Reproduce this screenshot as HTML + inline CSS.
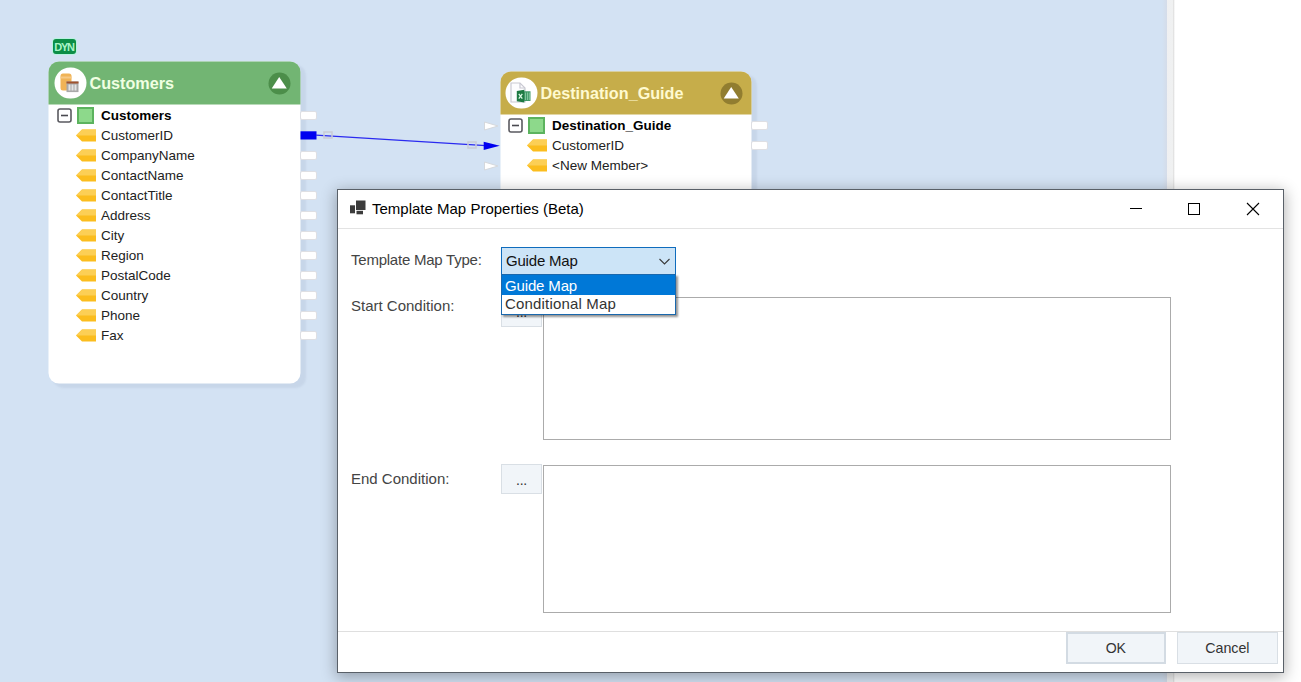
<!DOCTYPE html>
<html>
<head>
<meta charset="utf-8">
<title>Template Map Properties (Beta)</title>
<style>
*{box-sizing:border-box;margin:0;padding:0}
html,body{width:1301px;height:682px;overflow:hidden;background:#fff;font-family:"Liberation Sans",sans-serif}
#root{position:absolute;left:0;top:0;width:1301px;height:682px;overflow:hidden;background:#fff}
.abs{position:absolute}
#canvas{left:0;top:0;width:1167px;height:682px;background:linear-gradient(to right,#d3e2f3 0,#d3e2f3 1162px,#d4dce9 1167px)}
#strip{left:1167px;top:0;width:8px;height:682px;background:linear-gradient(to right,#eff0f2 0,#f0f1f1 6px,#e3e3e3 6.500px,#fff 8px)}
.node{position:absolute;background:#fff;border-radius:10.500px;transform:translate(-.5px,-.5px);box-shadow:5px 4px 2px rgba(120,140,170,.13)}
.node .hd{position:absolute;left:0;top:0;width:100%;height:43px;border-radius:10.500px 10.500px 0 0}
.node .ttl{position:absolute;left:41px;top:12px;font-weight:bold;font-size:16.200px;line-height:18px;color:#f0ffe2;white-space:nowrap}
.node .ico{position:absolute;left:6px;top:5.500px;width:31.500px;height:31.500px;border-radius:50%;background:#fff}
.node .tog{position:absolute;top:10.500px;width:22px;height:22px;border-radius:50%}
.row{position:absolute;font-size:13.5px;line-height:16px;color:#222;white-space:nowrap}
.row.b{font-weight:bold;color:#000}
.port{position:absolute;width:17px;height:9px;background:#fff;border:1px solid #dedfe3;border-radius:2px}
#dlg{left:337px;top:189px;width:947px;height:484px;background:#fff;border:1px solid #596068;box-shadow:0 3px 14px 1px rgba(0,0,0,.3)}
.lbl{position:absolute;font-size:15px;line-height:18px;color:#444;white-space:nowrap}
.btn{position:absolute;background:#f1f5f9;border:1px solid #d9dfe5;font-size:14.5px;color:#333;text-align:center}
.ta{position:absolute;background:#fff;border:1px solid #ababab}
</style>
</head>
<body>
<div id="root">
<div id="canvas" class="abs"></div>
<div id="strip" class="abs"></div>

<!-- DYN badge -->
<div class="abs" style="left:52px;top:38px;width:25px;height:17px;border-radius:4px;background:#b9f3e0"></div>
<div class="abs" style="left:53px;top:39px;width:23px;height:15px;border-radius:3px;background:#0c8e47;color:#a9f5c6;font-weight:bold;font-size:11px;line-height:16px;text-align:center;letter-spacing:-1.300px;text-indent:-1px;overflow:hidden">DYN</div>

<!-- Customers node -->
<div class="node" id="n1" style="left:49px;top:62px;width:252px;height:322px">
  <div class="hd" style="background:#72b573"></div>
  <div class="ico"></div>
  <svg class="abs" style="left:10px;top:9px" width="24" height="24" viewBox="0 0 24 24">
    <rect x="2" y="3" width="11" height="17" rx="2.5" fill="#f0b356"/>
    <rect x="2" y="6" width="11" height="2" fill="#f6c984"/>
    <rect x="8" y="11" width="12" height="10.600" fill="#a9a9a9"/>
    <rect x="8" y="11" width="12" height="2" fill="#a0522d"/>
    <rect x="10" y="14" width="2" height="6" fill="#e4e4e4"/>
    <rect x="13" y="14" width="2" height="6" fill="#e4e4e4"/>
    <rect x="16" y="14" width="2" height="6" fill="#e4e4e4"/>
  </svg>
  <div class="ttl">Customers</div>
  <div class="tog" style="left:220px;background:#4c8e4a"></div>
  <svg class="abs" style="left:223px;top:14.500px" width="16" height="13" viewBox="0 0 16 13"><path d="M7.700 0.500 L15.300 12 L0.200 12 Z" fill="#fff"/></svg>
</div>

<!-- Destination node -->
<div class="node" id="n2" style="left:501px;top:72px;width:251px;height:160px">
  <div class="hd" style="background:#c6ad4a"></div>
  <div class="ico" style="left:5px"></div>
  <svg class="abs" style="left:8px;top:9px" width="24" height="24" viewBox="0 0 24 24">
    <path d="M2.500 2.500 h9 l5 5 v14 h-14 z" fill="#fdfdff" stroke="#c9c9d2" stroke-width="1.200"/>
    <path d="M11.500 2.500 v5 h5" fill="none" stroke="#c9c9d2" stroke-width="1.200"/>
    <path d="M15.600 10.800 h6.400 v9.600 h-6.400 z" fill="#3f9a68"/>
    <path d="M17 12 v7.500 M19 12 v7.500 M20.800 12 v7.500" stroke="#8fd0ab" stroke-width=".8"/>
    <path d="M8.300 10.500 L15.800 9.300 V22 L8.300 20.800 Z" fill="#1d7a43"/>
    <path d="M10.300 13.300 L13.800 18.200 M13.800 13.300 L10.300 18.200" stroke="#d9f7e4" stroke-width="1.300"/>
  </svg>
  <div class="ttl" style="left:40px;color:#fffad0">Destination_Guide</div>
  <div class="tog" style="left:219.500px;background:#917d30"></div>
  <svg class="abs" style="left:222.500px;top:14.500px" width="16" height="13" viewBox="0 0 16 13"><path d="M7.700 0.500 L15.300 12 L0.200 12 Z" fill="#fff"/></svg>
</div>

<div id="rows">
<svg class="abs" style="left:57px;top:108px" width="15" height="15" viewBox="0 0 15 15"><rect x="1" y="1" width="13" height="13" rx="2" fill="#fff" stroke="#5a5a60" stroke-width="1.6"/><rect x="4" y="6.700" width="7" height="1.600" fill="#4a4a50"/></svg>
<div class="abs" style="left:77px;top:107px;width:17px;height:17px;background:#8dd98b;border:2px solid #5cb35e"></div>
<div class="row b" style="left:101px;top:108px">Customers</div>
<div class="port" style="left:300px;top:111px"></div>
<svg class="abs" style="left:76px;top:129px" width="20" height="13" viewBox="0 0 20 13"><path d="M0 6.500 L6 0.500 H20 V12.500 H6 Z" fill="#fbbd1e"/><path d="M0 6.500 L6 0.500 H20 V6.500 Z" fill="#fccf55"/></svg>
<div class="row" style="left:101px;top:128px">CustomerID</div>
<svg class="abs" style="left:76px;top:149px" width="20" height="13" viewBox="0 0 20 13"><path d="M0 6.500 L6 0.500 H20 V12.500 H6 Z" fill="#fbbd1e"/><path d="M0 6.500 L6 0.500 H20 V6.500 Z" fill="#fccf55"/></svg>
<div class="row" style="left:101px;top:148px">CompanyName</div>
<div class="port" style="left:300px;top:151px"></div>
<svg class="abs" style="left:76px;top:169px" width="20" height="13" viewBox="0 0 20 13"><path d="M0 6.500 L6 0.500 H20 V12.500 H6 Z" fill="#fbbd1e"/><path d="M0 6.500 L6 0.500 H20 V6.500 Z" fill="#fccf55"/></svg>
<div class="row" style="left:101px;top:168px">ContactName</div>
<div class="port" style="left:300px;top:171px"></div>
<svg class="abs" style="left:76px;top:189px" width="20" height="13" viewBox="0 0 20 13"><path d="M0 6.500 L6 0.500 H20 V12.500 H6 Z" fill="#fbbd1e"/><path d="M0 6.500 L6 0.500 H20 V6.500 Z" fill="#fccf55"/></svg>
<div class="row" style="left:101px;top:188px">ContactTitle</div>
<div class="port" style="left:300px;top:191px"></div>
<svg class="abs" style="left:76px;top:209px" width="20" height="13" viewBox="0 0 20 13"><path d="M0 6.500 L6 0.500 H20 V12.500 H6 Z" fill="#fbbd1e"/><path d="M0 6.500 L6 0.500 H20 V6.500 Z" fill="#fccf55"/></svg>
<div class="row" style="left:101px;top:208px">Address</div>
<div class="port" style="left:300px;top:211px"></div>
<svg class="abs" style="left:76px;top:229px" width="20" height="13" viewBox="0 0 20 13"><path d="M0 6.500 L6 0.500 H20 V12.500 H6 Z" fill="#fbbd1e"/><path d="M0 6.500 L6 0.500 H20 V6.500 Z" fill="#fccf55"/></svg>
<div class="row" style="left:101px;top:228px">City</div>
<div class="port" style="left:300px;top:231px"></div>
<svg class="abs" style="left:76px;top:249px" width="20" height="13" viewBox="0 0 20 13"><path d="M0 6.500 L6 0.500 H20 V12.500 H6 Z" fill="#fbbd1e"/><path d="M0 6.500 L6 0.500 H20 V6.500 Z" fill="#fccf55"/></svg>
<div class="row" style="left:101px;top:248px">Region</div>
<div class="port" style="left:300px;top:251px"></div>
<svg class="abs" style="left:76px;top:269px" width="20" height="13" viewBox="0 0 20 13"><path d="M0 6.500 L6 0.500 H20 V12.500 H6 Z" fill="#fbbd1e"/><path d="M0 6.500 L6 0.500 H20 V6.500 Z" fill="#fccf55"/></svg>
<div class="row" style="left:101px;top:268px">PostalCode</div>
<div class="port" style="left:300px;top:271px"></div>
<svg class="abs" style="left:76px;top:289px" width="20" height="13" viewBox="0 0 20 13"><path d="M0 6.500 L6 0.500 H20 V12.500 H6 Z" fill="#fbbd1e"/><path d="M0 6.500 L6 0.500 H20 V6.500 Z" fill="#fccf55"/></svg>
<div class="row" style="left:101px;top:288px">Country</div>
<div class="port" style="left:300px;top:291px"></div>
<svg class="abs" style="left:76px;top:309px" width="20" height="13" viewBox="0 0 20 13"><path d="M0 6.500 L6 0.500 H20 V12.500 H6 Z" fill="#fbbd1e"/><path d="M0 6.500 L6 0.500 H20 V6.500 Z" fill="#fccf55"/></svg>
<div class="row" style="left:101px;top:308px">Phone</div>
<div class="port" style="left:300px;top:311px"></div>
<svg class="abs" style="left:76px;top:329px" width="20" height="13" viewBox="0 0 20 13"><path d="M0 6.500 L6 0.500 H20 V12.500 H6 Z" fill="#fbbd1e"/><path d="M0 6.500 L6 0.500 H20 V6.500 Z" fill="#fccf55"/></svg>
<div class="row" style="left:101px;top:328px">Fax</div>
<div class="port" style="left:300px;top:331px"></div>
<svg class="abs" style="left:508px;top:118px" width="15" height="15" viewBox="0 0 15 15"><rect x="1" y="1" width="13" height="13" rx="2" fill="#fff" stroke="#5a5a60" stroke-width="1.6"/><rect x="4" y="6.700" width="7" height="1.600" fill="#4a4a50"/></svg>
<div class="abs" style="left:528px;top:117px;width:17px;height:17px;background:#8dd98b;border:2px solid #5cb35e"></div>
<div class="row b" style="left:552px;top:118px">Destination_Guide</div>
<div class="port" style="left:751px;top:121px"></div>
<svg class="abs" style="left:527px;top:139px" width="20" height="13" viewBox="0 0 20 13"><path d="M0 6.500 L6 0.500 H20 V12.500 H6 Z" fill="#fbbd1e"/><path d="M0 6.500 L6 0.500 H20 V6.500 Z" fill="#fccf55"/></svg>
<div class="row" style="left:552px;top:138px">CustomerID</div>
<div class="port" style="left:751px;top:141px"></div>
<svg class="abs" style="left:527px;top:159px" width="20" height="13" viewBox="0 0 20 13"><path d="M0 6.500 L6 0.500 H20 V12.500 H6 Z" fill="#fbbd1e"/><path d="M0 6.500 L6 0.500 H20 V6.500 Z" fill="#fccf55"/></svg>
<div class="row" style="left:552px;top:158px">&lt;New Member&gt;</div>
</div>

<!-- connector -->
<svg class="abs" style="left:0;top:0" width="1166" height="200" viewBox="0 0 1166 200">
  <rect x="300.500" y="131.300" width="16" height="8.200" fill="#0000f0"/>
  <line x1="316" y1="135.200" x2="486" y2="145.600" stroke="#2a2af0" stroke-width="1.200"/>
  <rect x="324" y="132" width="8" height="6" fill="none" stroke="#c9cbd6" stroke-width="1.5"/>
  <rect x="468" y="142" width="8" height="6" fill="none" stroke="#c9cbd6" stroke-width="1.5"/>
  <path d="M483.700 141.700 L499.800 145.800 L483.700 149.900 Z" fill="#0000f0"/>
  <path d="M484.500 122 L498 126 L484.500 130 Z" fill="#fff" stroke="#d5d8dc" stroke-width="1"/>
  <path d="M484.500 162 L498 166 L484.500 170 Z" fill="#fff" stroke="#d5d8dc" stroke-width="1"/>
</svg>

<!-- dialog -->
<div id="dlg" class="abs">
  <svg class="abs" style="left:11px;top:10px" width="20" height="17" viewBox="0 0 20 17">
    <rect x="7" y="0.500" width="9.500" height="9.500" fill="#3c3c3c"/>
    <rect x="1" y="5.300" width="5" height="8" fill="#3c3c3c"/>
    <rect x="7.500" y="10.800" width="6.500" height="3.500" fill="#3c3c3c"/>
  </svg>
  <div class="abs" id="title" style="left:34px;top:9.500px;font-size:15px;line-height:18px;color:#000;white-space:nowrap">Template Map Properties (Beta)</div>
  <svg class="abs" style="left:780px;top:5px" width="160" height="28" viewBox="0 0 160 28">
    <line x1="12" y1="13.5" x2="24" y2="13.5" stroke="#000" stroke-width="1"/>
    <rect x="70.500" y="8.500" width="11" height="11" fill="none" stroke="#000" stroke-width="1"/>
    <path d="M129 8 L141 20 M141 8 L129 20" stroke="#000" stroke-width="1.1" fill="none"/>
  </svg>
  <div class="abs" style="left:0;top:38px;width:945px;height:1px;background:#e3e3e3"></div>

  <div class="lbl" id="l1" style="left:13px;top:61px;letter-spacing:-.23px">Template Map Type:</div>
  <div class="lbl" id="l2" style="left:13px;top:107px">Start Condition:</div>
  <div class="lbl" id="l3" style="left:13px;top:280px">End Condition:</div>

  <div class="btn" style="left:163px;top:107px;width:41px;height:30px;line-height:29px;font-size:14px;letter-spacing:-.3px">...</div>
  <div class="btn" style="left:163px;top:274px;width:41px;height:30px;line-height:30px;font-size:14px;letter-spacing:-.3px">...</div>
  <div class="ta" style="left:205px;top:107px;width:628px;height:143px"></div>
  <div class="ta" style="left:205px;top:275px;width:628px;height:148px"></div>

  <!-- combo -->
  <div class="abs" style="left:163px;top:57px;width:175px;height:28px;background:#cce4f7;border:1px solid #0f6cbd"></div>
  <div class="abs" id="cb" style="left:168px;top:62px;letter-spacing:-.2px;font-size:15px;line-height:18px;color:#111;white-space:nowrap">Guide Map</div>
  <svg class="abs" style="left:320px;top:67px" width="14" height="10" viewBox="0 0 14 10"><path d="M1.500 2 L6.500 7 L11.500 2" stroke="#3a3a3a" stroke-width="1.100" fill="none"/></svg>
  <div class="abs" style="left:163px;top:84px;width:175px;height:41px;background:#fff;border:1px solid #1a68ad;box-shadow:2px 2px 2px rgba(0,0,0,.42)"></div>
  <div class="abs" style="left:164px;top:85px;width:173px;height:20px;background:#0078d7"></div>
  <div class="abs" id="o1" style="left:167px;top:87px;letter-spacing:-.15px;font-size:15px;line-height:18px;color:#fff;white-space:nowrap">Guide Map</div>
  <div class="abs" id="o2" style="left:167px;top:105px;letter-spacing:.17px;font-size:15px;line-height:18px;color:#333;white-space:nowrap">Conditional Map</div>

  <div class="abs" style="left:0;top:441px;width:945px;height:1px;background:#dfdfdf"></div>
  <div class="btn" style="left:728px;top:442px;width:100px;height:32px;line-height:27px;border:2px solid #d3dbe3;font-size:15px"><span style="display:inline-block;transform:scaleX(.94)">OK</span></div>
  <div class="btn" style="left:839px;top:442px;width:101px;height:32px;line-height:29px;font-size:15px"><span style="display:inline-block;transform:scaleX(.95)">Cancel</span></div>
</div>
</div>
</body>
</html>
